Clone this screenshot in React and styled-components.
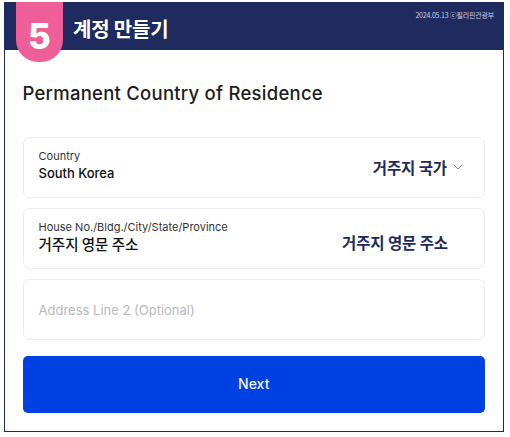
import React from 'react';
import styled, { createGlobalStyle } from 'styled-components';

const GlobalStyle = createGlobalStyle`
   body {
      margin: 0;
      background: #ffffff;
      font-family: Inter, "Noto Sans CJK KR", sans-serif;
   }
`;

const Frame = styled.div`
   box-sizing: border-box;
   width: 500px;
   height: 430px;
   margin: 2px 0 0 4px;
   border: 1.5px solid #1f2b5e;
   border-top: none;
   display: flex;
   flex-direction: column;
`;

const Header = styled.div`
   height: 48px;
   flex-shrink: 0;
   background: #1f2b5e;
   display: flex;
   align-items: flex-start;
   padding-left: 11px;
   position: relative;
   z-index: 1;
`;

const Badge = styled.div`
   width: 47px;
   height: 60px;
   background: #ee5f97;
   border-radius: 0 0 22px 22px;
   display: flex;
   justify-content: center;
   align-items: center;
   padding-top: 7px;
   box-sizing: border-box;
   color: #ffffff;
   font-family: Inter, sans-serif;
   font-weight: 800;
   font-size: 35px;
`;

const Title = styled.h1`
   margin: 0 0 0 10px;
   align-self: center;
   color: #ffffff;
   font-family: "Noto Sans CJK KR", sans-serif;
   font-weight: 700;
   font-size: 20px;
   letter-spacing: -0.2px;
   padding-top: 4px;
`;

const Stamp = styled.span`
   margin-left: auto;
   margin-right: 9px;
   padding-top: 8px;
   color: #c9cde3;
   font-family: "Noto Sans CJK KR", sans-serif;
   font-size: 7px;
   letter-spacing: -0.2px;
`;

const Content = styled.div`
   padding: 31px 18px 0 17.5px;
   display: flex;
   flex-direction: column;
`;

const Heading = styled.h2`
   margin: 0 0 32px;
   font-size: 18.5px;
   line-height: 24px;
   font-weight: 500;
   color: #1d1d1f;
   letter-spacing: 0.25px;
`;

const Fields = styled.div`
   display: flex;
   flex-direction: column;
   gap: 10px;
`;

const Field = styled.div`
   box-sizing: border-box;
   height: 61px;
   border: 1px solid #ececf0;
   border-radius: 7px;
   padding: ${({ empty }) => (empty ? '0 15px' : '11px 15px 0')};
   display: flex;
   align-items: ${({ empty }) => (empty ? 'center' : 'flex-start')};
`;

const FieldText = styled.div`
   display: flex;
   flex-direction: column;
`;

const Label = styled.span`
   font-size: 11px;
   line-height: 14px;
   color: #333338;
`;

const Value = styled.span`
   margin-top: 2px;
   font-size: 13px;
   line-height: 16px;
   font-weight: 500;
   color: #111114;
   font-family: ${({ kr }) => (kr ? '"Noto Sans CJK KR", sans-serif' : 'Inter, sans-serif')};
   ${({ kr }) => kr && 'font-size: 14.5px; line-height: 18px; margin-top: 1px;'}
`;

const Placeholder = styled.span`
   font-size: 13px;
   color: #b9b9be;
`;

const Note = styled.span`
   margin-left: auto;
   margin-right: ${({ right }) => right}px;
   margin-top: ${({ top }) => top}px;
   display: flex;
   align-items: center;
   gap: 6px;
   color: #1f2b5e;
   font-family: "Noto Sans CJK KR", sans-serif;
   font-weight: 700;
   font-size: 15.5px;
   letter-spacing: -0.1px;
`;

const Chevron = () => (
   <svg width="10" height="6" viewBox="0 0 10 6" fill="none">
      <path d="M1 1l4 4 4-4" stroke="#8a8a94" strokeWidth="1" />
   </svg>
);

const NextButton = styled.button`
   margin-top: 16px;
   height: 57px;
   border: none;
   border-radius: 5px;
   background: #0041e4;
   color: #eef2ff;
   font-family: Inter, sans-serif;
   font-size: 14px;
   font-weight: 500;
   padding-bottom: 3px;
`;

const App = () => (
   <>
      <GlobalStyle />
      <Frame>
         <Header>
            <Badge>5</Badge>
            <Title>계정 만들기</Title>
            <Stamp>2024.05.13 ⓒ필리핀관광부</Stamp>
         </Header>
         <Content>
            <Heading>Permanent Country of Residence</Heading>
            <Fields>
               <Field>
                  <FieldText>
                     <Label>Country</Label>
                     <Value>South Korea</Value>
                  </FieldText>
                  <Note right={6} top={7}>
                     거주지 국가 <Chevron />
                  </Note>
               </Field>
               <Field>
                  <FieldText>
                     <Label>House No./Bldg./City/State/Province</Label>
                     <Value kr>거주지 영문 주소</Value>
                  </FieldText>
                  <Note right={21} top={11}>
                     거주지 영문 주소
                  </Note>
               </Field>
               <Field empty>
                  <Placeholder>Address Line 2 (Optional)</Placeholder>
               </Field>
            </Fields>
            <NextButton>Next</NextButton>
         </Content>
      </Frame>
   </>
);

export default App;
